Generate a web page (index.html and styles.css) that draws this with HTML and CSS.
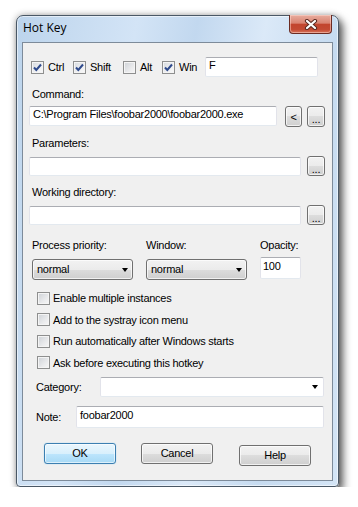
FILE: index.html
```html
<!DOCTYPE html>
<html lang="en">
<head>
<meta charset="UTF-8">
<title>Hot Key</title>
<link rel="stylesheet" href="styles.css">
</head>
<body>
<div class="window">
  <div class="titlebar">
    <span class="title">Hot Key</span>
    <span class="close">
      <svg width="14" height="11" viewBox="0 0 14 11">
        <path d="M3 2 L11 9 M11 2 L3 9" stroke="#5a2a22" stroke-width="4.2" stroke-linecap="round"/>
        <path d="M3 2 L11 9 M11 2 L3 9" stroke="#fff" stroke-width="2.2" stroke-linecap="round"/>
      </svg>
    </span>
  </div>

  <div class="client">
    <!-- modifier keys -->
    <div class="keys">
      <label class="key key-ctrl"><span class="cb checked"><svg width="11" height="11" viewBox="0 0 11 11"><path d="M2 5.5 L4.3 8 L9 2.5" fill="none" stroke="#2f4a8c" stroke-width="2"/></svg></span>Ctrl</label>
      <label class="key key-shift"><span class="cb checked"><svg width="11" height="11" viewBox="0 0 11 11"><path d="M2 5.5 L4.3 8 L9 2.5" fill="none" stroke="#2f4a8c" stroke-width="2"/></svg></span>Shift</label>
      <label class="key key-alt"><span class="cb"></span>Alt</label>
      <label class="key key-win"><span class="cb checked"><svg width="11" height="11" viewBox="0 0 11 11"><path d="M2 5.5 L4.3 8 L9 2.5" fill="none" stroke="#2f4a8c" stroke-width="2"/></svg></span>Win</label>
      <div class="edit key-edit">F</div>
    </div>

    <div class="label first">Command:</div>
    <div class="path-row">
      <div class="edit cmd-edit">C:\Program Files\foobar2000\foobar2000.exe</div>
      <button class="btn btn-back">&lt;</button>
      <button class="btn btn-browse">...</button>
    </div>

    <div class="label">Parameters:</div>
    <div class="path-row">
      <div class="edit path-edit"></div>
      <button class="btn btn-browse">...</button>
    </div>

    <div class="label">Working directory:</div>
    <div class="path-row">
      <div class="edit path-edit"></div>
      <button class="btn btn-browse">...</button>
    </div>

    <!-- priority / window / opacity -->
    <div class="columns labels">
      <span>Process priority:</span>
      <span>Window:</span>
      <span>Opacity:</span>
    </div>
    <div class="columns fields">
      <div class="combo">normal<span class="arrow"></span></div>
      <div class="combo">normal<span class="arrow"></span></div>
      <div class="edit opacity-edit">100</div>
    </div>

    <div class="options">
      <label class="option"><span class="cb"></span>Enable multiple instances</label>
      <label class="option"><span class="cb"></span>Add to the systray icon menu</label>
      <label class="option"><span class="cb"></span>Run automatically after Windows starts</label>
      <label class="option"><span class="cb"></span>Ask before executing this hotkey</label>
    </div>

    <div class="field-row category-row">
      <span class="field-label cat-label">Category:</span>
      <div class="edit category-combo"><span class="arrow"></span></div>
    </div>
    <div class="field-row note-row">
      <span class="field-label note-label">Note:</span>
      <div class="edit note-edit">foobar2000</div>
    </div>

    <div class="buttons">
      <button class="btn push default">OK</button>
      <button class="btn push cancel">Cancel</button>
      <button class="btn push help">Help</button>
    </div>
  </div>
</div>
</body>
</html>
```

FILE: styles.css
```css
body {
    margin: 0;
    background: #fff;
    font-family: "Liberation Sans", Arial, sans-serif;
    font-size: 11px;
    letter-spacing: -0.25px;
    color: #000;
}

.window {
    box-sizing: border-box;
    width: 323px;
    height: 472px;
    margin: 15px 0 0 16px;
    padding: 0 5px 5px 5px;
    border: 1px solid #4a5866;
    border-radius: 7px 7px 4px 4px;
    background: linear-gradient(100deg, #bcd4ec 0%, #d3e4f6 30%, #c2d8ef 45%, #dbe9f8 62%, #c6dbf0 80%, #d4e5f6 100%);
    box-shadow: inset 0 0 0 1px rgba(255, 255, 255, 0.55), 4px 5px 9px rgba(0, 0, 0, 0.6), 0 0 7px rgba(0, 0, 0, 0.3);
}

.titlebar {
    display: flex;
    justify-content: space-between;
    align-items: flex-start;
    height: 26px;
}

.title {
    padding: 4px 0 0 1px;
    font-family: "Open Sans", "Noto Sans", sans-serif;
    font-size: 12px;
    line-height: 15px;
    letter-spacing: 0;
    color: #000;
}

.close {
    box-sizing: border-box;
    display: flex;
    align-items: center;
    justify-content: center;
    width: 43px;
    height: 19px;
    margin: -1px 1px 0 0;
    border: 1px solid #6b2b22;
    border-top: none;
    border-radius: 0 0 4px 4px;
    background: linear-gradient(#e8ad9f 0%, #d98472 45%, #c2452e 52%, #c34a33 80%, #d7735a 100%);
    box-shadow: inset 0 0 0 1px rgba(255, 220, 210, 0.5);
}

.client {
    box-sizing: border-box;
    height: 439px;
    padding: 0 7px 0 6px;
    border: 1px solid #7d8b9a;
    background: #f0f0f0;
}

/* check boxes */
.cb {
    box-sizing: border-box;
    display: inline-flex;
    align-items: center;
    justify-content: center;
    flex: none;
    width: 13px;
    height: 13px;
    margin-right: 4px;
    border: 1px solid #8e8f8f;
    background: linear-gradient(135deg, #cdd1d6 0%, #e9eaec 60%, #f7f7f7 100%);
    box-shadow: inset 0 0 0 1px #f4f4f4;
}

.cb.checked {
    background: linear-gradient(135deg, #d5d9de 0%, #eeeff1 60%, #fafafa 100%);
}

.keys {
    display: flex;
    align-items: center;
    height: 20px;
    margin-top: 14px;
    padding-left: 2px;
}

.key {
    display: flex;
    align-items: center;
}

.key-ctrl { width: 42px; }
.key-shift { width: 50px; }
.key-alt { width: 39px; }
.key-win { width: 43px; }

/* edit fields */
.edit {
    box-sizing: border-box;
    position: relative;
    display: flex;
    align-items: center;
    height: 20px;
    padding: 0 3px 3px 3px;
    line-height: 13px;
    border: 1px solid #e2e3ea;
    border-top-color: #abadb3;
    border-bottom-color: #e3e9ef;
    border-radius: 2px;
    background: #fff;
    white-space: nowrap;
}

.key-edit { width: 113px; }

.label {
    margin-top: 8px;
    padding-left: 3px;
    line-height: 13px;
}

.label.first {
    margin-top: 11px;
}

.path-row {
    display: flex;
    align-items: flex-start;
    margin-top: 6px;
}

.path-row + .label {
    margin-top: 10px;
}

.cmd-edit { width: 248px; margin-top: -1px; }
.path-edit { width: 272px; margin-top: 1px; height: 19px; }

/* buttons */
.btn {
    box-sizing: border-box;
    padding: 0;
    font-family: inherit;
    font-size: 11px;
    letter-spacing: inherit;
    color: #000;
    border: 1px solid #707070;
    border-radius: 3px;
    background: linear-gradient(#f2f2f2 0%, #ebebeb 50%, #dddddd 50%, #cfcfcf 100%);
    box-shadow: inset 0 0 0 1px rgba(255, 255, 255, 0.7);
}

.btn-back {
    width: 17px;
    height: 21px;
    margin-left: 8px;
    margin-top: -1px;
}

.btn-browse {
    width: 18px;
    height: 20px;
    margin-left: 6px;
    padding-top: 5px;
    line-height: 10px;
}

.path-row .btn-back + .btn-browse {
    margin-left: 5px;
    margin-top: -1px;
    height: 21px;
}

/* priority, window, opacity */
.columns {
    display: grid;
    grid-template-columns: 114px 114px 41px;
    margin-left: 3px;
}

.labels {
    margin-top: 14px;
    line-height: 13px;
}

.fields {
    margin-top: 5px;
    align-items: start;
}

.combo {
    box-sizing: border-box;
    position: relative;
    width: 101px;
    height: 21px;
    margin-top: 2px;
    padding: 3px 0 0 4px;
    line-height: 13px;
    border: 1px solid #707070;
    border-radius: 3px;
    background: linear-gradient(#f2f2f2 0%, #ebebeb 50%, #dddddd 50%, #cfcfcf 100%);
    box-shadow: inset 0 0 0 1px rgba(255, 255, 255, 0.7);
}

.arrow {
    position: absolute;
    right: 4px;
    top: 8px;
    width: 0;
    height: 0;
    border-left: 3.5px solid transparent;
    border-right: 3.5px solid transparent;
    border-top: 4px solid #000;
}

.opacity-edit {
    width: 41px;
    height: 22px;
    padding-left: 2px;
}

/* option check boxes */
.options {
    margin-top: 7.5px;
    padding-left: 8px;
}

.option {
    display: flex;
    align-items: center;
    height: 21.5px;
}

.option .cb {
    margin-right: 3px;
}

/* category and note */
.field-row {
    display: flex;
    align-items: center;
    padding-left: 7px;
}

.field-label {
    padding-bottom: 1px;
}

.category-row { margin-top: 3.5px; }
.note-row { margin-top: 9px; }

.cat-label { width: 64px; }
.note-label { width: 40px; }

.category-combo {
    width: 224px;
}

.category-combo .arrow {
    right: 5px;
    top: 7px;
}

.note-edit {
    width: 248px;
    height: 22px;
}

/* dialog buttons */
.buttons {
    display: flex;
    align-items: flex-start;
    margin-top: 15px;
    padding-left: 15px;
}

.push {
    width: 72px;
    height: 21px;
    padding-bottom: 1px;
}

.default {
    border-color: #3c7fb1;
    background: linear-gradient(#eaf6fd 0%, #d9f0fc 50%, #bee6fd 50%, #a7d9f5 100%);
    box-shadow: inset 0 0 0 1px rgba(255, 255, 255, 0.6), 0 0 1px #6cc3ee;
}

.cancel { margin-left: 25px; }

.help {
    margin-left: 26px;
    margin-top: 2px;
}
```
